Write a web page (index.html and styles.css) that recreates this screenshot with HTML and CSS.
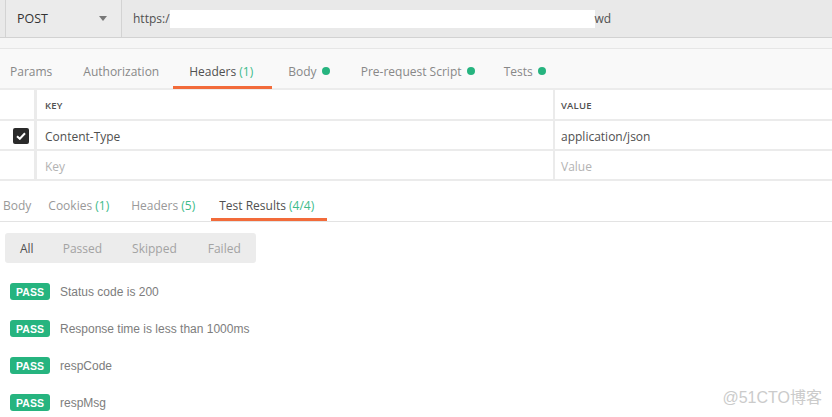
FILE: index.html
```html
<!DOCTYPE html>
<html>
<head>
<meta charset="utf-8">
<link rel="stylesheet" href="styles.css">
</head>
<body>
<div class="page">
  <div class="request-bar">
    <div class="method">
      <span class="method-name">POST</span>
      <span class="caret"></span>
    </div>
    <div class="url">
      <span class="url-text">https:/</span>
      <span class="redact"></span>
      <span class="url-text">wd</span>
    </div>
  </div>
  <div class="spacer"></div>
  <div class="req-tabs">
    <div class="tab first">Params</div>
    <div class="tab">Authorization</div>
    <div class="tab active">Headers <span class="count">(1)</span></div>
    <div class="tab">Body <span class="dot"></span></div>
    <div class="tab">Pre-request Script <span class="dot"></span></div>
    <div class="tab">Tests <span class="dot"></span></div>
  </div>
  <div class="table">
    <div class="row head">
      <div class="cell check"></div>
      <div class="cell key">KEY</div>
      <div class="cell value">VALUE</div>
    </div>
    <div class="row">
      <div class="cell check"><span class="checkbox"><svg width="10" height="8" viewBox="0 0 10 8"><path d="M1 4.2 L3.8 6.8 L9 1.2" fill="none" stroke="#fff" stroke-width="2"/></svg></span></div>
      <div class="cell key">Content-Type</div>
      <div class="cell value">application/json</div>
    </div>
    <div class="row">
      <div class="cell check"></div>
      <div class="cell key placeholder">Key</div>
      <div class="cell value placeholder">Value</div>
    </div>
  </div>
  <div class="res-tabs">
    <div class="rtab first">Body</div>
    <div class="rtab">Cookies <span class="count">(1)</span></div>
    <div class="rtab">Headers <span class="count">(5)</span></div>
    <div class="rtab active">Test Results <span class="count">(4/4)</span></div>
  </div>
  <div class="filter">
    <span class="fitem on">All</span>
    <span class="fitem">Passed</span>
    <span class="fitem">Skipped</span>
    <span class="fitem">Failed</span>
  </div>
  <div class="results">
    <div class="result"><span class="badge">PASS</span><span class="name">Status code is 200</span></div>
    <div class="result"><span class="badge">PASS</span><span class="name">Response time is less than 1000ms</span></div>
    <div class="result"><span class="badge">PASS</span><span class="name">respCode</span></div>
    <div class="result"><span class="badge">PASS</span><span class="name">respMsg</span></div>
  </div>
  <div class="watermark">@51CTO博客</div>
</div>
</body>
</html>
```
FILE: styles.css
```css
* { box-sizing: border-box; }
html, body { margin: 0; padding: 0; }
body {
  width: 832px;
  height: 417px;
  overflow: hidden;
  background: #ffffff;
  font-family: "Open Sans", "Noto Sans", sans-serif;
  font-size: 12px;
  color: #505050;
}
.page { position: relative; width: 832px; height: 417px; }

.request-bar {
  height: 38px;
  background: #e9e9e9;
  border-bottom: 1px solid #d2d2d2;
  display: flex;
  padding-left: 5px;
}
.method {
  width: 117px;
  height: 37px;
  border-left: 1px solid #d3d3d3;
  border-right: 1px solid #d3d3d3;
  background: #ebebeb;
  display: flex;
  align-items: center;
  justify-content: space-between;
  padding: 0 14px 0 11px;
}
.method-name { color: #333333; font-size: 12.5px; }
.caret {
  width: 0; height: 0;
  border-left: 4px solid transparent;
  border-right: 4px solid transparent;
  border-top: 5px solid #777777;
}
.url {
  display: flex;
  align-items: center;
  padding-left: 11px;
  color: #505050;
}
.redact {
  display: inline-block;
  width: 425px;
  height: 18px;
  background: #ffffff;
}

.spacer {
  height: 11px;
  background: #f6f6f6;
  border-bottom: 1px solid #e6e6e6;
}

.req-tabs {
  height: 41px;
  background: #f9f9f9;
  border-bottom: 2px solid #ececec;
  display: flex;
  align-items: stretch;
  padding-left: 10px;
}
.tab {
  position: relative;
  display: flex;
  align-items: center;
  color: #888888;
  white-space: pre;
  padding-top: 5px;
  margin-right: 31px;
}
.tab:nth-child(2) { margin-right: 30px; }
.tab.active { color: #505050; margin-right: 35px; }
.tab:nth-child(5) { margin-right: 29px; }
.tab.active::after {
  content: "";
  position: absolute;
  left: -16px;
  right: -19px;
  bottom: -1px;
  height: 3px;
  background: #f26b3a;
}
.count { color: #3dbb8a; }
.dot {
  display: inline-block;
  width: 8px;
  height: 8px;
  border-radius: 50%;
  background: #26b47f;
  margin-left: 2px;
}

.table { background: #ffffff; }
.row {
  display: flex;
  height: 30px;
  border-bottom: 2px solid #ebebeb;
}
.row.head { height: 31px; }
.cell {
  display: flex;
  align-items: center;
  border-right: 3px solid #ebebeb;
  padding-top: 2px;
}
.cell.check { width: 37px; justify-content: center; padding-left: 8px; }
.cell.key { width: 518px; padding-left: 8px; border-right-width: 2px; }
.cell.value { flex: 1; border-right: none; padding-left: 6px; }
.head .cell { font-size: 9.5px; font-weight: 600; color: #505050; letter-spacing: 0.2px; padding-top: 1px; }
.placeholder { color: #b3b3b3; }
.checkbox {
  width: 16px;
  height: 16px;
  border-radius: 2px;
  background: #2a2a2a;
  display: flex;
  align-items: center;
  justify-content: center;
}

.res-tabs {
  height: 41px;
  border-bottom: 1px solid #e3e3e3;
  display: flex;
  align-items: stretch;
  padding-left: 3px;
}
.rtab {
  position: relative;
  display: flex;
  align-items: center;
  color: #999999;
  white-space: pre;
  margin-left: 22px;
  padding-top: 8px;
}
.rtab.first { margin-left: 0; margin-right: -5px; }
.rtab.active { color: #505050; margin-left: 24px; }
.rtab.active::after {
  content: "";
  position: absolute;
  left: -8px;
  right: -13px;
  bottom: 0;
  height: 3px;
  background: #f26b3a;
}

.filter {
  margin: 11px 0 0 5px;
  width: 251px;
  height: 30px;
  background: #ececec;
  border-radius: 3px;
  display: flex;
  align-items: center;
  padding-left: 15px;
}
.fitem { color: #a3a3a3; margin-right: 30px; }
.fitem.on { color: #505050; margin-right: 29px; }
.fitem:nth-child(3) { margin-right: 31px; }

.results { padding: 20px 0 0 10px; }
.result {
  display: flex;
  align-items: center;
  height: 17px;
  margin-bottom: 20px;
}
.badge {
  width: 40px;
  height: 17px;
  border-radius: 3px;
  background: #26b47f;
  color: #ffffff;
  font-family: "Liberation Sans", Arial, sans-serif;
  font-weight: bold;
  font-size: 10.5px;
  display: flex;
  align-items: center;
  justify-content: center;
}
.name {
  margin-left: 10px;
  font-family: "Liberation Sans", Arial, sans-serif;
  font-size: 12px;
  color: #7d7d7d;
}

.watermark {
  position: absolute;
  right: 10px;
  bottom: 9px;
  font-family: "Liberation Sans", "Noto Sans CJK SC", sans-serif;
  font-size: 16px;
  color: #cbcbcb;
}
```
